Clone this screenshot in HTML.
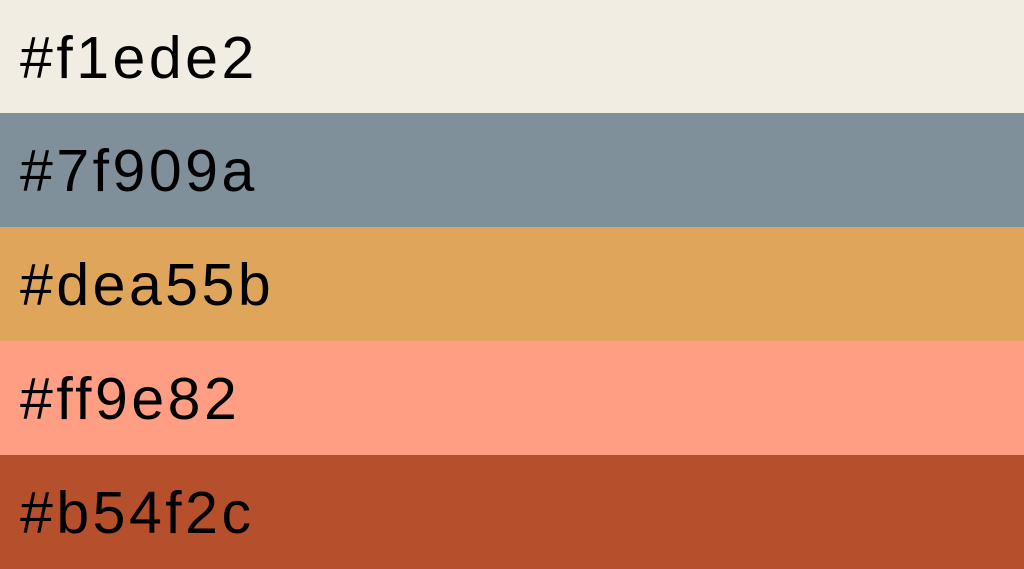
<!DOCTYPE html>
<html><head><meta charset="utf-8"><style>
html,body{margin:0;padding:0;width:1024px;height:569px;overflow:hidden}
.b{position:absolute;left:0;width:1024px;height:114px}
.t{position:absolute;left:20px;top:25px;font-family:"Liberation Sans",sans-serif;font-size:59px;line-height:66px;letter-spacing:3.5px;color:#000}
</style></head><body>
<div class="b" style="top:0;background:#f1ede2"><span class="t">#f1ede2</span></div>
<div class="b" style="top:113px;background:#7f909a"><span class="t">#7f909a</span></div>
<div class="b" style="top:227px;background:#dea55b"><span class="t">#dea55b</span></div>
<div class="b" style="top:341px;background:#ff9e82"><span class="t">#ff9e82</span></div>
<div class="b" style="top:455px;background:#b54f2c"><span class="t">#b54f2c</span></div>
</body></html>
